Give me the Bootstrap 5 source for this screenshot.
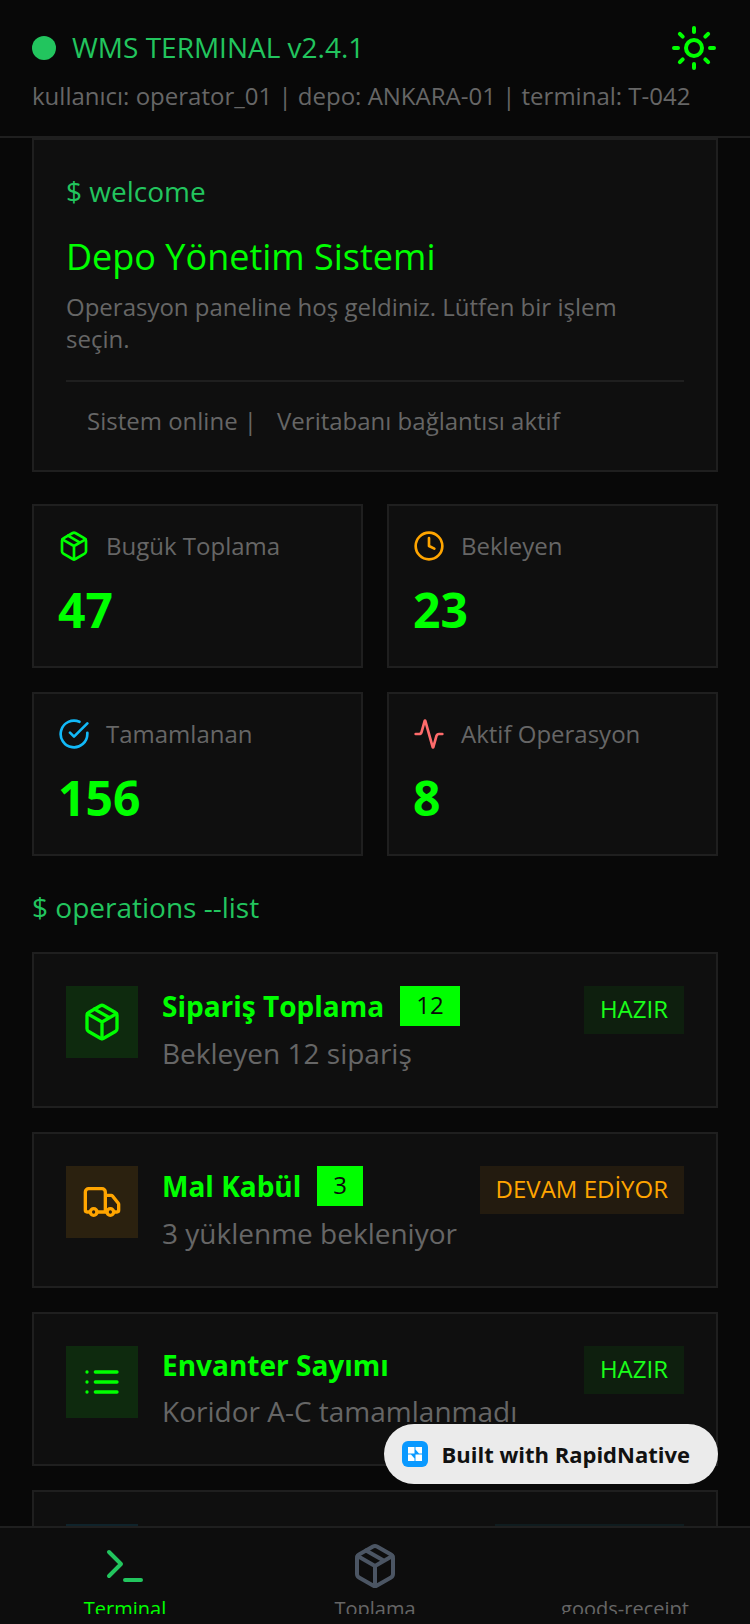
<!DOCTYPE html>
<html lang="tr" data-bs-theme="dark">
<head>
<meta charset="utf-8">
<meta name="viewport" content="width=device-width, initial-scale=1">
<title>WMS Terminal</title>
<link href="https://cdn.jsdelivr.net/npm/bootstrap@5.3.0/dist/css/bootstrap.min.css" rel="stylesheet">
<style>
  :root { --neon: #00ff00; --green: #22c55e; --dim: #666; --line: #1f1f1f; --panel: #0f0f0f; --amber: #ffa500; --sky: #12b9f8; --rose: #ff6b6b; }
  body { font-family: "Open Sans", "Noto Sans", sans-serif; background: #080808; color: var(--dim); font-size: 24px; line-height: 32px; }
  svg { display: block; flex: none; fill: none; stroke: currentColor; stroke-width: 2; stroke-linecap: round; stroke-linejoin: round; }
  .app-shell { height: 100vh; overflow: hidden; }
  .top-bar { padding: 24px 32px; border-bottom: 2px solid var(--line); }
  .status-dot { width: 24px; height: 24px; background: var(--green); }
  .prompt { font-size: 28px; line-height: 38px; padding-bottom: 2px; color: var(--green); }
  .neon { color: var(--neon); } .amber { color: var(--amber); } .sky { color: var(--sky); } .rose { color: var(--rose); }
  .icon-btn { background: none; border: 0; padding: 0; color: var(--neon); }
  .scroll-area { min-height: 0; overflow: hidden; padding: 0 32px; }
  .panel { background: var(--panel); border: 2px solid var(--line); flex: none; }
  .pad-lg { padding: 32px; }
  .panel h1 { font-size: 36px; line-height: 44px; font-weight: 400; margin: 23px 0 12px; }
  .panel-foot { border-top: 2px solid var(--line); margin-top: 25px; padding: 23px 21px 1px; gap: 20px; }
  .stat-grid { display: grid; grid-template-columns: 1fr 1fr; gap: 24px; margin: 32px 0; }
  .stat { padding: 24px; }
  .stat strong { display: block; font-size: 48px; line-height: 64px; margin-top: 16px; }
  .op-icon { flex: none; width: 72px; height: 72px; background: #0e2a0e; }
  .op-icon.amber { background: #2b210f; }
  .op-icon.sky { background: #0f232b; }
  .op-body { min-width: 0; }
  .op-title { font-size: 28px; line-height: 38px; font-weight: 700; margin: 0; }
  .op-desc { font-size: 28px; line-height: 38px; margin: 8px 0 2px; white-space: nowrap; }
  .count { background: var(--neon); color: #0a0a0a; padding: 3px 16px 5px; }
  .state { flex: none; background: #0e1f0e; color: #1aff1a; padding: 7px 16px 9px; white-space: nowrap; }
  .state.amber { background: #231b0f; color: var(--amber); }
  .state.sky { background: #0f1c1f; color: var(--sky); }
  .tab-bar { background: #0d0d0d; border-top: 2px solid var(--line); padding-bottom: 10px; }
  .tab-bar .row { height: 86px; overflow: hidden; }
  .tab { color: var(--dim); font-size: 20px; line-height: 28px; padding-top: 14px; gap: 5px; }
  .tab svg { width: 48px; height: 48px; color: #4b5563; }
  .tab.active { color: var(--neon); }
  .tab.active svg { color: var(--green); }
  .made-with { position: fixed; right: 32px; bottom: 140px; height: 60px; padding: 0 28px 0 18px; gap: 13px; background: #ebebeb; color: #111; font-size: 22px; font-weight: 700; }
  .made-with:hover { color: #111; }
  .made-with svg { stroke: none; }
</style>
</head>
<body>
<svg width="0" height="0" class="position-absolute" aria-hidden="true">
  <symbol id="box" viewBox="0 0 24 24"><path d="M21 16V8a2 2 0 0 0-1-1.73l-7-4a2 2 0 0 0-2 0l-7 4A2 2 0 0 0 3 8v8a2 2 0 0 0 1 1.73l7 4a2 2 0 0 0 2 0l7-4A2 2 0 0 0 21 16z"/><path d="M3.3 7l8.7 5 8.7-5M12 22V12M7.5 4.27l9 5.15"/></symbol>
</svg>
<div class="app-shell d-flex flex-column">
  <header class="top-bar">
    <div class="d-flex align-items-center justify-content-between">
      <div class="d-flex align-items-center gap-3"><span class="status-dot rounded-circle"></span><span class="prompt">WMS TERMINAL v2.4.1</span></div>
      <button class="icon-btn" type="button" aria-label="Tema">
        <svg width="48" height="48" viewBox="0 0 24 24"><circle cx="12" cy="12" r="4"/><path d="M12 2v2M12 20v2M4.93 4.93l1.41 1.41M17.66 17.66l1.41 1.41M2 12h2M20 12h2M6.34 17.66l-1.41 1.41M19.07 4.93l-1.41 1.41"/></svg>
      </button>
    </div>
    <div class="mt-2">kullanıcı: operator_01 | depo: ANKARA-01 | terminal: T-042</div>
  </header>

  <main class="scroll-area flex-grow-1 d-flex flex-column">
    <section class="panel pad-lg">
      <div class="prompt">$ welcome</div>
      <h1 class="neon">Depo Yönetim Sistemi</h1>
      <p class="m-0">Operasyon paneline hoş geldiniz. Lütfen bir işlem seçin.</p>
      <div class="panel-foot d-flex"><span>Sistem online |</span><span>Veritabanı bağlantısı aktif</span></div>
    </section>

    <section class="stat-grid">
      <div class="panel stat">
        <div class="d-flex align-items-center gap-3"><svg class="neon" width="32" height="32"><use href="#box"/></svg><span>Bugük Toplama</span></div>
        <strong class="neon">47</strong>
      </div>
      <div class="panel stat">
        <div class="d-flex align-items-center gap-3"><svg class="amber" width="32" height="32" viewBox="0 0 24 24"><circle cx="12" cy="12" r="10"/><path d="M12 6v6l4 2"/></svg><span>Bekleyen</span></div>
        <strong class="neon">23</strong>
      </div>
      <div class="panel stat">
        <div class="d-flex align-items-center gap-3"><svg class="sky" width="32" height="32" viewBox="0 0 24 24"><path d="M22 11.08V12a10 10 0 1 1-5.93-9.14M22 4 12 14.01l-3-3"/></svg><span>Tamamlanan</span></div>
        <strong class="neon">156</strong>
      </div>
      <div class="panel stat">
        <div class="d-flex align-items-center gap-3"><svg class="rose" width="32" height="32" viewBox="0 0 24 24"><path d="M22 12h-2.48a2 2 0 0 0-1.93 1.46l-2.35 8.36a.25.25 0 0 1-.48 0L9.24 2.18a.25.25 0 0 0-.48 0l-2.35 8.36A2 2 0 0 1 4.49 12H2"/></svg><span>Aktif Operasyon</span></div>
        <strong class="neon">8</strong>
      </div>
    </section>

    <h2 class="prompt fw-normal mb-4">$ operations --list</h2>
    <div class="d-flex flex-column gap-4">
      <article class="panel pad-lg d-flex align-items-start gap-4">
        <span class="op-icon neon d-flex align-items-center justify-content-center"><svg width="40" height="40"><use href="#box"/></svg></span>
        <div class="op-body flex-grow-1">
          <div class="d-flex align-items-center gap-3"><h3 class="op-title neon">Sipariş Toplama</h3><span class="count">12</span></div>
          <p class="op-desc">Bekleyen 12 sipariş</p>
        </div>
        <span class="state">HAZIR</span>
      </article>
      <article class="panel pad-lg d-flex align-items-start gap-4">
        <span class="op-icon amber d-flex align-items-center justify-content-center"><svg width="40" height="40" viewBox="0 0 24 24"><path d="M14 18V6a2 2 0 0 0-2-2H4a2 2 0 0 0-2 2v11a1 1 0 0 0 1 1h2M15 18H9M19 18h2a1 1 0 0 0 1-1v-3.65a1 1 0 0 0-.22-.62l-3.48-4.35A1 1 0 0 0 17.52 8H14"/><circle cx="17" cy="18" r="2"/><circle cx="7" cy="18" r="2"/></svg></span>
        <div class="op-body flex-grow-1">
          <div class="d-flex align-items-center gap-3"><h3 class="op-title neon">Mal Kabül</h3><span class="count">3</span></div>
          <p class="op-desc">3 yüklenme bekleniyor</p>
        </div>
        <span class="state amber">DEVAM EDİYOR</span>
      </article>
      <article class="panel pad-lg d-flex align-items-start gap-4">
        <span class="op-icon neon d-flex align-items-center justify-content-center"><svg width="40" height="40" viewBox="0 0 24 24"><path d="M8 6h13M8 12h13M8 18h13M3 6h.01M3 12h.01M3 18h.01"/></svg></span>
        <div class="op-body flex-grow-1">
          <h3 class="op-title neon">Envanter Sayımı</h3>
          <p class="op-desc">Koridor A-C tamamlanmadı</p>
        </div>
        <span class="state">HAZIR</span>
      </article>
      <article class="panel pad-lg d-flex align-items-start gap-4">
        <span class="op-icon sky"></span>
        <div class="op-body flex-grow-1"></div>
        <span class="state sky">TAMAMLANDI</span>
      </article>
    </div>
  </main>

  <nav class="tab-bar flex-shrink-0">
    <div class="row g-0 text-center">
      <a href="#" class="tab active col d-flex flex-column align-items-center text-decoration-none"><svg viewBox="0 0 24 24"><path d="M4 17l6-6-6-6M12 19h8"/></svg>Terminal</a>
      <a href="#" class="tab col d-flex flex-column align-items-center text-decoration-none"><svg><use href="#box"/></svg>Toplama</a>
      <a href="#" class="tab col d-flex flex-column align-items-center text-decoration-none"><svg></svg>goods-receipt</a>
    </div>
  </nav>
</div>
<a href="#" class="made-with rounded-pill d-flex align-items-center text-decoration-none">
  <svg width="26" height="26" viewBox="0 0 26 26"><rect width="26" height="26" rx="6" fill="#0a99ff"/><path fill="#fff" d="M6 6h6.500v6.500H6zM13.500 6H20v6.500h-3L13.500 8.500zM6 13.500h3l3.500 4V20H6zM13.500 13.500H20V20h-6.500z"/></svg>
  Built with RapidNative
</a>
<script src="https://cdn.jsdelivr.net/npm/bootstrap@5.3.0/dist/js/bootstrap.bundle.min.js"></script>
</body>
</html>
